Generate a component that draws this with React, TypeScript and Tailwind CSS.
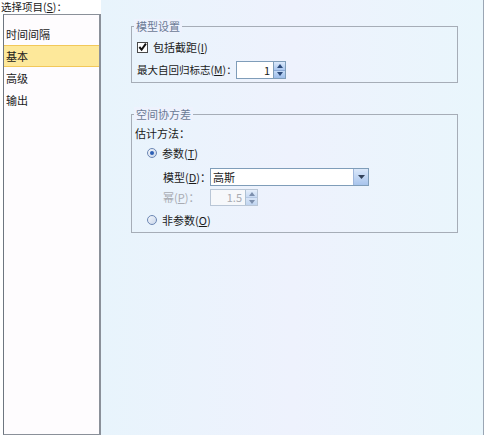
import React from "react";

const font = { fontFamily: '"Noto Sans CJK SC", "Liberation Sans", sans-serif' };

function SpinButtons({ disabled }: { disabled?: boolean }) {
  return (
    <div className={`flex w-[12px] shrink-0 flex-col border-l border-[#7f9db9] ${disabled ? "opacity-60" : ""}`}>
      <div className="flex flex-1 items-center justify-center border-b border-[#8ba9d6] bg-gradient-to-b from-[#dbe9fb] to-[#a9c6ee]">
        <svg width="6" height="4" viewBox="0 0 6 4">
          <path d="M0 4 L3 0 L6 4 Z" fill="#2c4a7a" />
        </svg>
      </div>
      <div className="flex flex-1 items-center justify-center bg-gradient-to-b from-[#c4daf6] to-[#9dbde9]">
        <svg width="6" height="4" viewBox="0 0 6 4">
          <path d="M0 0 L6 0 L3 4 Z" fill="#2c4a7a" />
        </svg>
      </div>
    </div>
  );
}

function Radio({ checked }: { checked?: boolean }) {
  return (
    <span className="flex h-[10px] w-[10px] shrink-0 items-center justify-center rounded-full border border-[#6c87b4] bg-gradient-to-br from-[#f4f7fc] to-[#c9d6ea]">
      {checked && <span className="h-[4px] w-[4px] rounded-full bg-[#2c5fb4]" />}
    </span>
  );
}

export default function App() {
  const items = ["时间间隔", "基本", "高级", "输出"];
  return (
    <div className="flex h-[435px] w-[500px] whitespace-nowrap bg-white text-[11px] text-[#1a1a1a]" style={font}>
      {/* left column */}
      <div className="flex w-[101px] shrink-0 flex-col">
        <div className="h-[14px] pl-[1px] text-[10.5px] leading-[14px]">
          选择项目(<span className="underline">S</span>)：
        </div>
        <div className="ml-[3px] flex-1 border border-r-2 border-[#8a9099] border-l-[#6e7680] bg-[#fefcfe] pt-[8px]">
          {items.map((it) => (
            <div
              key={it}
              className={`flex h-[22px] items-center pl-[2px] ${
                it === "基本" ? "border-y border-[#f2c85a] bg-[#fde89a]" : ""
              }`}
            >
              {it}
            </div>
          ))}
        </div>
      </div>

      {/* right panel */}
      <div className="flex w-[383px] shrink-0 flex-col border-r border-[#9aa6b4] bg-gradient-to-r from-[#e8f4fc] via-[#eef2fd] to-[#e9f6fc] pl-[30px] pr-[25px] pt-[26px]">
        {/* group 1 */}
        <div className="relative h-[57px] border border-[#a6adb7] pl-[5px] pt-[11px]">
          <span className="absolute -top-[8px] left-[2px] bg-[#eef2fd] px-[2px] leading-[14px] text-[#6b7a95]">
            模型设置
          </span>
          <div className="flex h-[18px] items-center">
            <span className="flex h-[11px] w-[11px] shrink-0 items-center justify-center border border-[#4a4a4a] bg-white">
              <svg width="10" height="10" viewBox="0 0 10 10">
                <path d="M1.5 5 L4 8 L8.8 1.2" stroke="#111" strokeWidth="2.2" fill="none" />
              </svg>
            </span>
            <span className="ml-[5px]">
              包括截距(<span className="underline">I</span>)
            </span>
          </div>
          <div className="mt-[5px] flex h-[18px] items-center">
            <span className="w-[99px] shrink-0 text-[10.5px]">
              最大自回归标志(<span className="underline">M</span>)：
            </span>
            <div className="flex h-[18px] w-[50px] shrink-0 border border-[#7f9db9] bg-white">
              <span className="flex-1 pr-[3px] text-right leading-[16px]">1</span>
              <SpinButtons />
            </div>
          </div>
        </div>

        {/* group 2 */}
        <div className="relative mt-[31px] h-[119px] border border-[#a6adb7] pl-[3px] pt-[10px]">
          <span className="absolute -top-[8px] left-[2px] bg-[#eef2fd] px-[2px] leading-[14px] text-[#6b7a95]">
            空间协方差
          </span>
          <div className="flex h-[16px] items-center">估计方法：</div>
          <div className="mt-[4px] flex h-[16px] items-center pl-[12px]">
            <Radio checked />
            <span className="ml-[5px]">
              参数(<span className="underline">T</span>)
            </span>
          </div>
          <div className="mt-[7px] flex h-[18px] items-center pl-[28px]">
            <span className="w-[47px] shrink-0">
              模型(<span className="underline">D</span>)：
            </span>
            <div className="flex h-[18px] w-[159px] shrink-0 border border-[#7f9db9] bg-white">
              <span className="flex-1 pl-[2px] leading-[16px]">高斯</span>
              <div className="flex w-[15px] items-center justify-center border-l border-[#9fb7dc] bg-gradient-to-b from-[#dbe8fa] to-[#a8c4ec]">
                <svg width="7" height="4" viewBox="0 0 7 4">
                  <path d="M0 0 L7 0 L3.5 4 Z" fill="#33425a" />
                </svg>
              </div>
            </div>
          </div>
          <div className="mt-[3px] flex h-[17px] items-center pl-[28px] text-[#a8abb2]">
            <span className="w-[47px] shrink-0">
              幂(<span className="underline">P</span>)：
            </span>
            <div className="flex h-[17px] w-[48px] shrink-0 border border-[#b9c6d6] bg-[#f6f8fb]">
              <span className="flex-1 pr-[3px] text-right leading-[15px]">1.5</span>
              <SpinButtons disabled />
            </div>
          </div>
          <div className="mt-[6px] flex h-[16px] items-center pl-[12px]">
            <Radio />
            <span className="ml-[5px]">
              非参数(<span className="underline">O</span>)
            </span>
          </div>
        </div>
      </div>
    </div>
  );
}
